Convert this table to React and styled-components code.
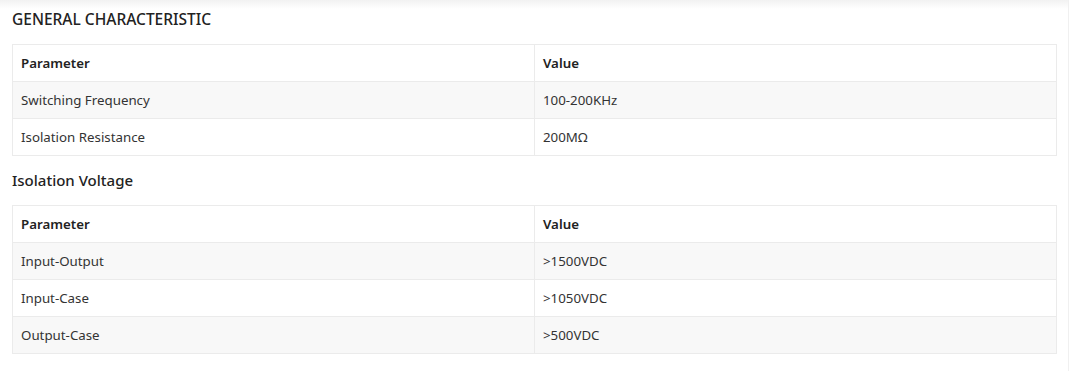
import React from 'react';
import styled, { createGlobalStyle } from 'styled-components';

const GlobalStyle = createGlobalStyle`
    body {
        margin: 0;
        background: #fff;
        font-family: "Noto Sans", "Noto Sans CJK SC", sans-serif;
        color: #333;
    }
`;

const Page = styled.div`
    width: 1069px;
    height: 371px;
    box-sizing: border-box;
    border-right: 1px solid #f0f0f0;
    background: linear-gradient(180deg, #f2f2f2 0px, #fff 9px);
    padding: 8px 12px 0 12px;
`;

const Title = styled.h3`
    margin: 0;
    height: 22px;
    line-height: 23px;
    font-size: ${p => (p.$upper ? '15.5px' : '15px')};
    font-weight: 500;
    color: #222;
`;

const Table = styled.table`
    width: 1045px;
    border-collapse: collapse;
    margin: 14px 0 13px 0;
    font-size: 13.3px;
    color: #333;
`;

const Row = styled.tr`
    background: ${p => (p.$shade ? '#f8f8f8' : '#fff')};
`;

const Cell = styled.td`
    border: 1px solid #ebebeb;
    height: 37px;
    padding: 0 8px;
    box-sizing: border-box;
    width: 50%;
    font-weight: ${p => (p.$head ? 600 : 400)};
    color: ${p => (p.$head ? '#222' : '#333')};
    vertical-align: middle;
`;

function SpecTable({ rows }) {
    return (
        <Table>
            <tbody>
                <Row>
                    <Cell $head>Parameter</Cell>
                    <Cell $head>Value</Cell>
                </Row>
                {rows.map((r, i) => (
                    <Row key={r[0]} $shade={i % 2 === 0}>
                        <Cell>{r[0]}</Cell>
                        <Cell>{r[1]}</Cell>
                    </Row>
                ))}
            </tbody>
        </Table>
    );
}

export default function App() {
    return (
        <>
            <GlobalStyle />
            <Page>
                <Title $upper>GENERAL CHARACTERISTIC</Title>
                <SpecTable rows={[
                    ['Switching Frequency', '100-200KHz'],
                    ['Isolation Resistance', '200MΩ'],
                ]} />
                <Title>Isolation Voltage</Title>
                <SpecTable rows={[
                    ['Input-Output', '>1500VDC'],
                    ['Input-Case', '>1050VDC'],
                    ['Output-Case', '>500VDC'],
                ]} />
            </Page>
        </>
    );
}
